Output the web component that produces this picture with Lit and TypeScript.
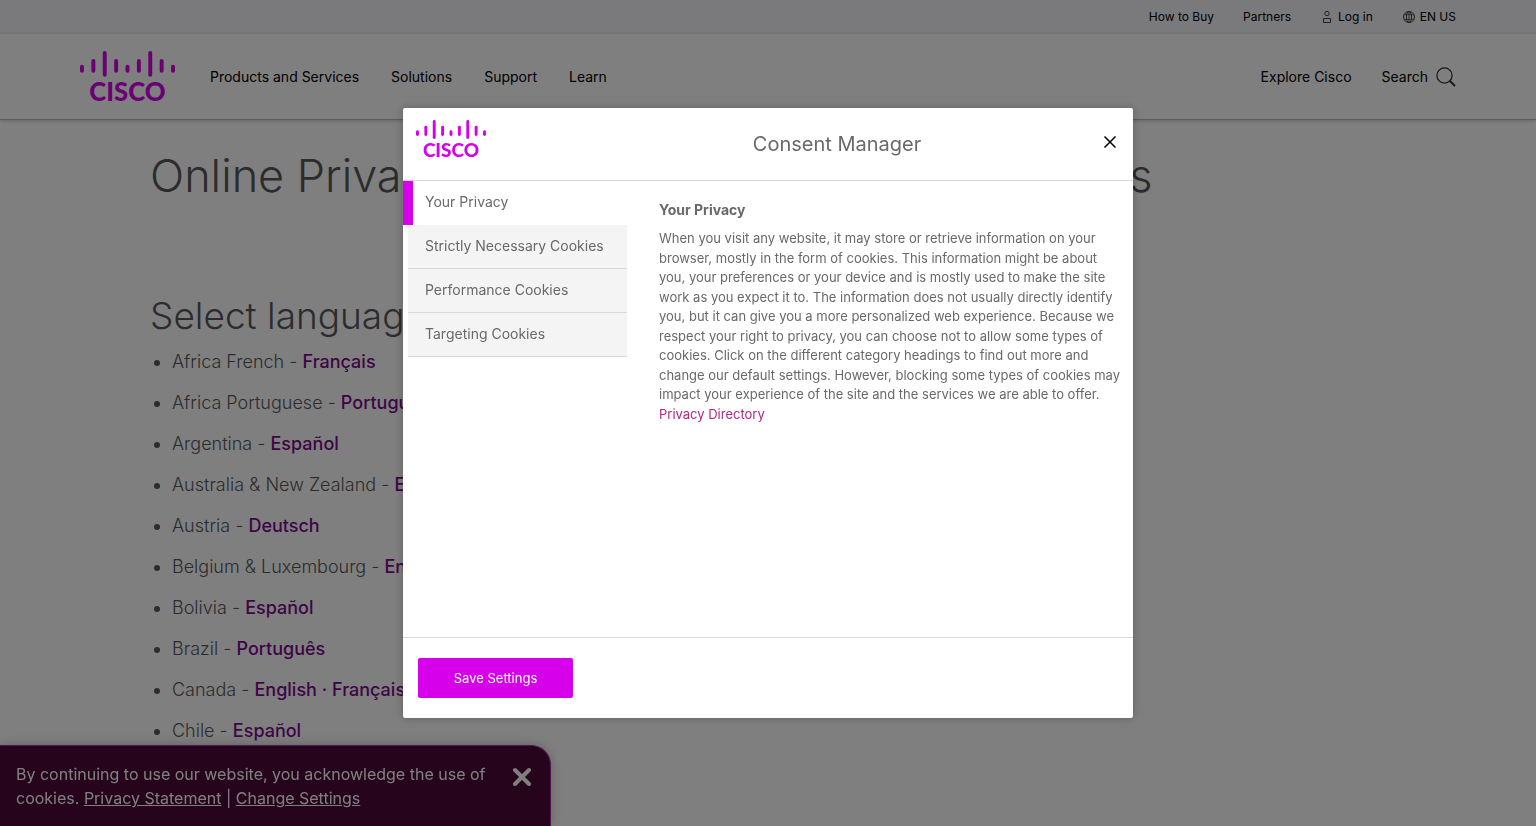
import { LitElement, html, css, svg } from "lit";
import { customElement, property, state } from "lit/decorators.js";
import { classMap } from "lit/directives/class-map.js";

const BARS = [
  [1, 14, 22], [12.5, 8, 22], [24, 0, 26], [35.5, 8, 22], [47, 14, 22],
  [58.5, 8, 22], [70, 0, 26], [81.5, 8, 22], [93, 14, 22],
];

const LANGUAGES: { country: string; links: string[] }[] = [
  { country: "Africa French", links: ["Français"] },
  { country: "Africa Portuguese", links: ["Português"] },
  { country: "Argentina", links: ["Español"] },
  { country: "Australia & New Zealand", links: ["English"] },
  { country: "Austria", links: ["Deutsch"] },
  { country: "Belgium & Luxembourg", links: ["English"] },
  { country: "Bolivia", links: ["Español"] },
  { country: "Brazil", links: ["Português"] },
  { country: "Canada", links: ["English", "Français"] },
  { country: "Chile", links: ["Español"] },
];

const CATEGORIES = [
  "Your Privacy",
  "Strictly Necessary Cookies",
  "Performance Cookies",
  "Targeting Cookies",
];

@customElement("brand-logo")
export class BrandLogo extends LitElement {
  static styles = css`
    :host { display: block; color: #d600eb; }
    svg { display: block; width: 100%; height: auto; overflow: visible; }
    .bar { stroke: currentColor; stroke-width: 4; stroke-linecap: round; }
    .word { fill: currentColor; font: 900 26px Lato, sans-serif; text-anchor: middle; }
  `;
  render() {
    return html`<svg viewBox="0 0 96 52" role="img" aria-label="Cisco">
      ${BARS.map(([x, top, bottom]) => svg`<line class="bar" x1=${x + 1} x2=${x + 1} y1=${top + 2} y2=${bottom - 2}></line>`)}
      <text class="word" x="48" y="51">CISCO</text>
    </svg>`;
  }
}

@customElement("site-header")
export class SiteHeader extends LitElement {
  static styles = css`
    :host { display: block; }
    a { color: #000; text-decoration: none; }
    .utility {
      display: flex; justify-content: flex-end; gap: 29px; height: 34px;
      padding: 0 80px; box-sizing: border-box; background: #f4f4f9;
      font-size: 12px; line-height: 34px;
    }
    .utility a { display: flex; align-items: center; gap: 4px; }
    .bar {
      display: flex; align-items: center; height: 86px; padding: 0 80px;
      box-sizing: border-box; border-bottom: 1px solid #b4b4b4;
      box-shadow: 0 1px 4px rgba(0, 0, 0, 0.2); font-size: 14px; line-height: 20px;
    }
    .logo { width: 95px; margin-right: 35px; }
    .nav { display: flex; gap: 32px; flex: 1; }
    .tools { display: flex; align-items: center; gap: 30px; }
    .search {
      display: flex; align-items: center; gap: 8px; padding: 0; border: 0;
      background: none; font: inherit; color: #000;
    }
    svg { display: block; fill: none; stroke: #444; }
    .search svg { stroke: #333; }
  `;
  render() {
    return html`
      <nav class="utility" aria-label="Utility">
        <a href="#">How to Buy</a>
        <a href="#">Partners</a>
        <a href="#">
          <svg width="14" height="14" viewBox="0 0 14 14"><circle cx="7" cy="3.5" r="2.2" /><path d="M3.500 12.500V8.500h7v4z" /></svg>
          Log in
        </a>
        <a href="#">
          <svg width="14" height="14" viewBox="0 0 14 14"><circle cx="7" cy="7" r="5.500" /><ellipse cx="7" cy="7" rx="2.600" ry="5.500" /><path d="M7 1.500v11M2.200 4.700h9.600M2.200 9.300h9.600" stroke-width="0.8" /></svg>
          EN US
        </a>
      </nav>
      <div class="bar">
        <brand-logo class="logo"></brand-logo>
        <nav class="nav" aria-label="Main">
          <a href="#">Products and Services</a>
          <a href="#">Solutions</a>
          <a href="#">Support</a>
          <a href="#">Learn</a>
        </nav>
        <div class="tools">
          <a href="#">Explore Cisco</a>
          <button class="search" type="button">
            Search
            <svg width="20" height="20" viewBox="0 0 20 20"><circle cx="8.500" cy="8.500" r="7.600" stroke-width="1.300" /><path d="M13.500 13.500L19 19" stroke-width="2" /></svg>
          </button>
        </div>
      </div>
    `;
  }
}

@customElement("language-page")
export class LanguagePage extends LitElement {
  static styles = css`
    :host { display: block; padding: 26px 150px 0; color: #58585b; }
    h1, h2 { margin: 0; font-weight: 300; }
    h1 { font-size: 45px; line-height: 60px; }
    h2 { margin-top: 84px; font-size: 37px; line-height: 52px; }
    .list { margin: 6px 0 0; padding-left: 22px; font-size: 18px; font-weight: 300; line-height: 27px; }
    .item { margin-bottom: 14px; }
    .links { color: #7d0b8c; font-weight: 500; }
    .link { color: inherit; text-decoration: none; }
  `;
  render() {
    return html`
      <h1>Online Privacy Statement Summary Translations</h1>
      <h2>Select language</h2>
      <ul class="list">
        ${LANGUAGES.map(({ country, links }) => html`<li class="item">${country} - <span class="links">${links.map(
          (name, i) => html`${i ? " · " : ""}<a class="link" href="#">${name}</a>`
        )}</span></li>`)}
      </ul>
    `;
  }
}

@customElement("cookie-banner")
export class CookieBanner extends LitElement {
  static styles = css`
    :host {
      display: flex; justify-content: space-between; align-items: flex-start;
      width: 551px; max-width: 100%; padding: 16px; box-sizing: border-box;
      border: 1px solid #a02da0; border-width: 1px 1px 0 0; border-radius: 0 20px 0 0;
      background: #4b0839; box-shadow: 0 0 12px rgba(0, 0, 0, 0.25);
      color: #fff; font-size: 16px; line-height: 24px;
    }
    p { margin: 0; max-width: 475px; }
    a { color: inherit; }
    .close { padding: 4px 2px; border: 0; background: none; }
    svg { display: block; }
  `;
  render() {
    return html`
      <p>By continuing to use our website, you acknowledge the use of cookies.
        <a href="#">Privacy Statement</a> | <a href="#">Change Settings</a></p>
      <button class="close" type="button" aria-label="Close">
        <svg width="20" height="20" viewBox="0 0 20 20"><path d="M3 4l14 14M17 4L3 18" stroke="#fff" stroke-width="4" stroke-linecap="round" /></svg>
      </button>
    `;
  }
}

@customElement("consent-dialog")
export class ConsentDialog extends LitElement {
  @property() selected = CATEGORIES[0];

  static styles = css`
    :host {
      display: flex; flex-direction: column; width: 730px; height: 610px;
      max-width: 100%; max-height: 100%; border-radius: 2px; background: #fff;
      box-shadow: 0 0 10px rgba(0, 0, 0, 0.25); color: #696969; overflow: hidden;
    }
    .head { display: flex; height: 72px; border-bottom: 1px solid #d8d8d8; }
    .logo { width: 70px; margin: 12px 0 0 13px; }
    .title { flex: 1; margin: 0 0 0 89px; font-size: 20px; font-weight: 400; line-height: 72px; text-align: center; }
    .close { align-self: flex-start; margin: 23px 12px 0 0; padding: 4px; border: 0; background: none; }
    svg { display: block; }
    .body { display: flex; flex: 1; }
    .tabs { flex: 0 0 224px; }
    .tab {
      display: block; width: 219px; height: 44px; margin: 0 0 0 5px; padding: 0 0 2px 17px;
      border: 0; border-bottom: 1px solid #d8d8d8; background: #f4f4f4;
      font: inherit; font-size: 14px; color: inherit; text-align: left;
    }
    .tab.active {
      width: 224px; margin: 0; padding: 0 0 3px 12px;
      border-left: 10px solid #d600eb; border-bottom: 0; background: #fff;
    }
    .panel { flex: 1; padding: 19px 11px 0 32px; }
    .heading { margin: 0 0 9px; font-size: 14px; font-weight: 700; line-height: 20px; }
    .copy { margin: 0; font-size: 13px; line-height: 1.5; }
    .link { color: #b5267e; text-decoration: none; }
    .foot { height: 81px; padding: 20px 15px 0; box-sizing: border-box; border-top: 1px solid #d8d8d8; }
    .save {
      width: 155px; height: 40px; border: 0; border-radius: 2px; background: #d600eb;
      color: #fff; font: inherit; font-size: 13px;
    }
  `;
  render() {
    return html`
      <header class="head">
        <brand-logo class="logo"></brand-logo>
        <h2 class="title">Consent Manager</h2>
        <button class="close" type="button" aria-label="Close">
          <svg width="14" height="14" viewBox="0 0 14 14"><path d="M1.500 1.500l11 11M12.500 1.500l-11 11" stroke="#000" stroke-width="1.500" /></svg>
        </button>
      </header>
      <div class="body">
        <div class="tabs" role="tablist">
          ${CATEGORIES.map((name) => html`<button
            type="button" role="tab"
            class=${classMap({ tab: true, active: name === this.selected })}
            aria-selected=${name === this.selected}
            @click=${() => (this.selected = name)}
          >${name}</button>`)}
        </div>
        <section class="panel">
          <h3 class="heading">${this.selected}</h3>
          <p class="copy">When you visit any website, it may store or retrieve information on your browser, mostly in the form of cookies. This information might be about you, your preferences or your device and is mostly used to make the site work as you expect it to. The information does not usually directly identify you, but it can give you a more personalized web experience. Because we respect your right to privacy, you can choose not to allow some types of cookies. Click on the different category headings to find out more and change our default settings. However, blocking some types of cookies may impact your experience of the site and the services we are able to offer.
            <br /><a class="link" href="#">Privacy Directory</a></p>
        </section>
      </div>
      <footer class="foot"><button class="save" type="button">Save Settings</button></footer>
    `;
  }
}

@customElement("app-root")
export class AppRoot extends LitElement {
  @state() private open = true;

  static styles = css`
    :host {
      display: block; height: 100vh; overflow: hidden; background: #fff;
      font-family: Inter, "Liberation Sans", sans-serif;
    }
    .banner { position: fixed; left: 0; bottom: 0; }
    .overlay {
      position: fixed; inset: 0; display: flex; align-items: center; justify-content: center;
      background: rgba(0, 0, 0, 0.5);
    }
  `;
  render() {
    return html`
      <site-header></site-header>
      <language-page></language-page>
      <cookie-banner class="banner"></cookie-banner>
      ${this.open ? html`<div class="overlay"><consent-dialog role="dialog" aria-label="Consent Manager"></consent-dialog></div>` : ""}
    `;
  }
}
